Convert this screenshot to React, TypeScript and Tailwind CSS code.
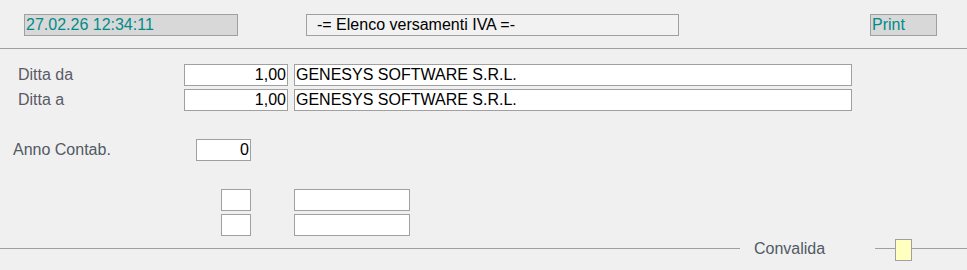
export default function App() {
  const font = { fontFamily: '"Liberation Sans", Arial, sans-serif' }
  return (
    <div className="w-[967px] h-[270px] bg-[#f0f0f0] text-[16px] overflow-hidden" style={font}>
      <div className="flex h-[49px] border-b border-[#a0a0a0] pt-[14px]">
        <div className="ml-[24px] h-[22px] w-[214px] border border-[#a0a0a0] bg-[#d8d8d8] pl-[1px] leading-[20px] text-[#008b8b]">
          27.02.26 12:34:11
        </div>
        <div className="ml-[68px] h-[22px] w-[373px] border border-[#a0a0a0] bg-[#f2f2f2] pl-[10px] leading-[20px] text-black">
          -= Elenco versamenti IVA =-
        </div>
        <div className="ml-[191px] h-[22px] w-[67px] border border-[#a0a0a0] bg-[#d8d8d8] pl-[1px] leading-[20px] text-[#008b8b]">
          Print
        </div>
      </div>

      <div className="mt-[15px] flex flex-col gap-[3px]">
        <DittaRow label="Ditta da" />
        <DittaRow label="Ditta a" />
      </div>

      <div className="mt-[28px] flex h-[22px] items-center">
        <span className="ml-[13px] w-[183px] text-[#505a64]">Anno Contab.</span>
        <Field className="w-[55px] text-right pr-[1px]">0</Field>
      </div>

      <div className="mt-[28px] flex flex-col gap-[3px]">
        {[0, 1].map((i) => (
          <div key={i} className="flex h-[22px]">
            <Field className="ml-[221px] w-[30px]" />
            <Field className="ml-[43px] w-[116px]" />
          </div>
        ))}
      </div>

      <div className="mt-[3px] flex h-[22px] items-start">
        <div className="mt-[9px] h-px w-[740px] bg-[#a0a0a0]" />
        <span className="ml-[14px] w-[121px] leading-[20px] text-[#505a64]">Convalida</span>
        <div className="mt-[9px] h-px w-[20px] bg-[#a0a0a0]" />
        <div className="h-[22px] w-[17px] border border-[#a0a0a0] bg-[#ffffc0]" />
        <div className="mt-[9px] h-px flex-1 bg-[#a0a0a0]" />
      </div>
    </div>
  )
}

const Field = ({ className = "", children }: { className?: string; children?: React.ReactNode }) => (
  <div className={`h-[22px] border border-[#a0a0a0] bg-white leading-[20px] text-black ${className}`}>{children}</div>
)

const DittaRow = ({ label }: { label: string }) => (
  <div className="flex h-[22px] items-center">
    <span className="ml-[18px] w-[166px] text-[#5a5a66]">{label}</span>
    <Field className="w-[104px] pr-[1px] text-right">1,00</Field>
    <Field className="ml-[6px] w-[558px] pl-[1px]">GENESYS SOFTWARE S.R.L.</Field>
  </div>
)
